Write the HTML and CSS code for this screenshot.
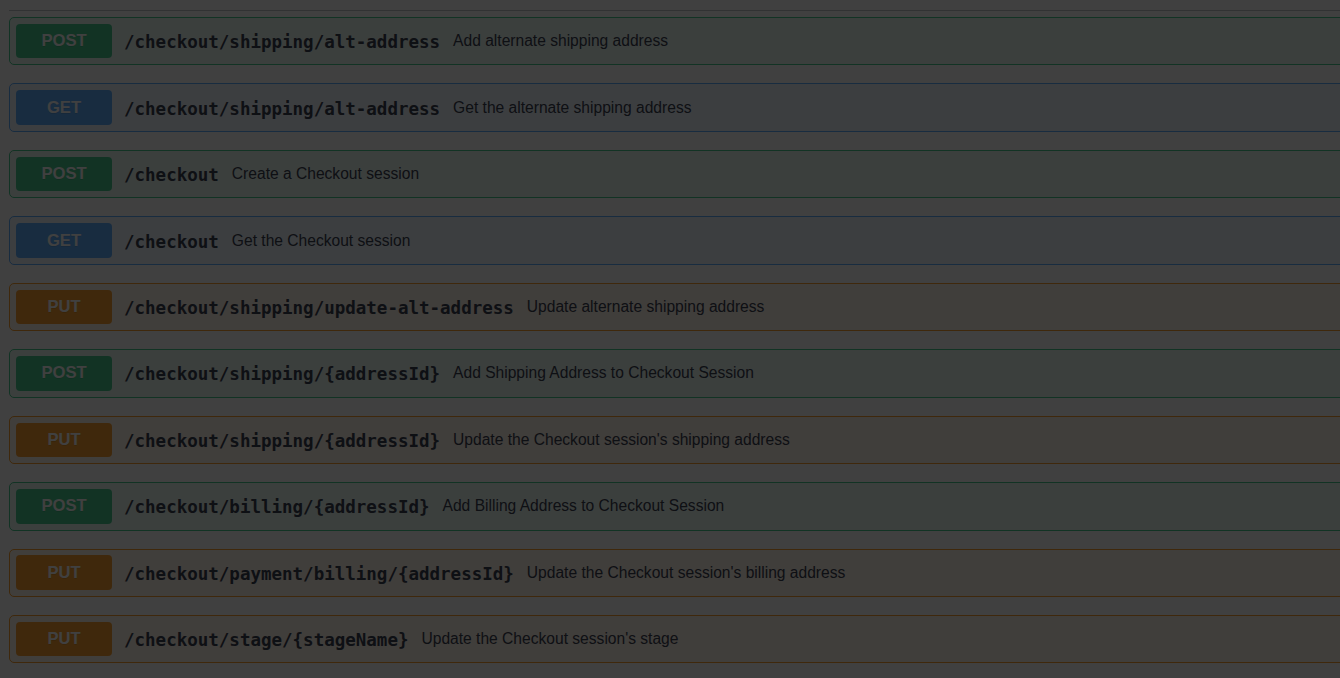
FILE: index.html
```html
<!DOCTYPE html>
<html lang="en">
<head>
<meta charset="utf-8">
<title>Checkout API</title>
<link rel="stylesheet" href="styles.css">
</head>
<body>
<div class="page">
  <div class="tag-header"></div>
  <div class="ops">
    <div class="opblock post"><span class="method">POST</span><span class="path">/checkout/shipping/alt-address</span><span class="desc">Add alternate shipping address</span></div>
    <div class="opblock get"><span class="method">GET</span><span class="path">/checkout/shipping/alt-address</span><span class="desc">Get the alternate shipping address</span></div>
    <div class="opblock post"><span class="method">POST</span><span class="path">/checkout</span><span class="desc">Create a Checkout session</span></div>
    <div class="opblock get"><span class="method">GET</span><span class="path">/checkout</span><span class="desc">Get the Checkout session</span></div>
    <div class="opblock put"><span class="method">PUT</span><span class="path">/checkout/shipping/update-alt-address</span><span class="desc">Update alternate shipping address</span></div>
    <div class="opblock post"><span class="method">POST</span><span class="path">/checkout/shipping/{addressId}</span><span class="desc">Add Shipping Address to Checkout Session</span></div>
    <div class="opblock put"><span class="method">PUT</span><span class="path">/checkout/shipping/{addressId}</span><span class="desc">Update the Checkout session's shipping address</span></div>
    <div class="opblock post"><span class="method">POST</span><span class="path">/checkout/billing/{addressId}</span><span class="desc">Add Billing Address to Checkout Session</span></div>
    <div class="opblock put"><span class="method">PUT</span><span class="path">/checkout/payment/billing/{addressId}</span><span class="desc">Update the Checkout session's billing address</span></div>
    <div class="opblock put"><span class="method">PUT</span><span class="path">/checkout/stage/{stageName}</span><span class="desc">Update the Checkout session's stage</span></div>
  </div>
</div>
<div class="backdrop"></div>
</body>
</html>
```
FILE: styles.css
```css
html, body {
  margin: 0;
  padding: 0;
  background: #fff;
  overflow: hidden;
}
body {
  font-family: "Liberation Sans", Arial, sans-serif;
  color: #3b4151;
}
.page {
  width: 1400px;
  padding-left: 9px;
}
.tag-header {
  height: 10px;
  border-bottom: 1px solid rgba(59, 65, 81, 0.3);
}
.ops {
  padding-top: 6px;
}
.opblock {
  box-sizing: border-box;
  height: 48.44px;
  margin-bottom: 18px;
  border: 1px solid;
  border-radius: 5px;
  padding: 0 6px;
  display: flex;
  align-items: center;
}
.opblock.post { background: rgba(73, 204, 144, 0.1); border-color: #49cc90; }
.opblock.get { background: rgba(97, 175, 254, 0.1); border-color: #61affe; }
.opblock.put { background: rgba(252, 161, 48, 0.1); border-color: #fca130; }
.method {
  box-sizing: border-box;
  width: 96px;
  height: 34.5px;
  border-radius: 4px;
  color: #fff;
  font-weight: bold;
  font-size: 16.6px;
  display: flex;
  align-items: center;
  justify-content: center;
  text-shadow: 0 1px 0 rgba(0, 0, 0, 0.1);
  flex: none;
}
.post .method { background: #49cc90; }
.get .method { background: #61affe; }
.put .method { background: #fca130; }
.path {
  font-family: "DejaVu Sans Mono", monospace;
  font-weight: bold;
  font-size: 17.5px;
  padding: 2px 12px 0 12px;
  color: #3b4151;
  white-space: nowrap;
}
.desc {
  font-size: 15.6px;
  color: #3b4151;
  white-space: nowrap;
  padding-left: 1px;
}
.backdrop {
  position: fixed;
  inset: 0;
  background: rgba(0, 0, 0, 0.75);
}
```
